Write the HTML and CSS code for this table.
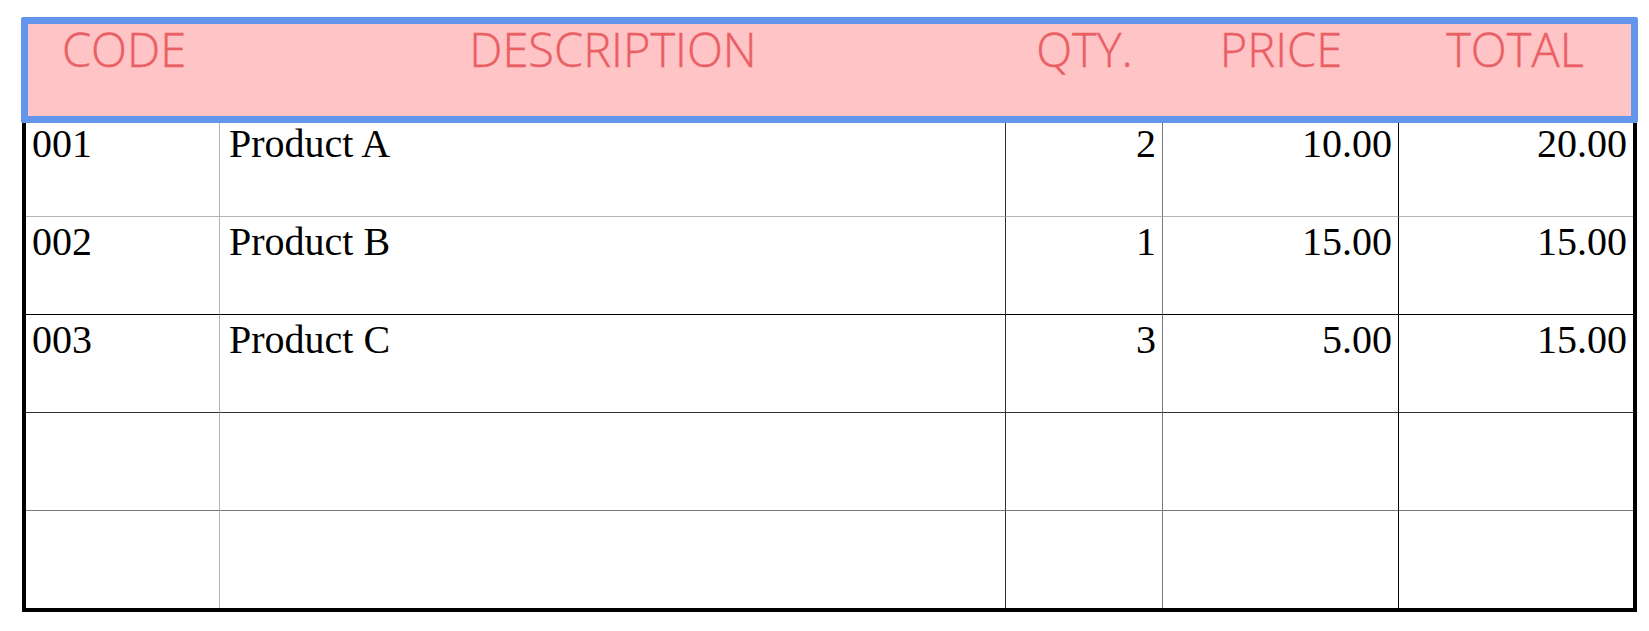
FILE: index.html
```html
<!DOCTYPE html>
<html lang="en">
<head>
<meta charset="utf-8">
<title>Invoice table</title>
<link rel="stylesheet" href="styles.css">
</head>
<body>
<main class="sheet">
  <div class="head">
    <div class="th">CODE</div>
    <div class="th">DESCRIPTION</div>
    <div class="th">QTY.</div>
    <div class="th">PRICE</div>
    <div class="th">TOTAL</div>
  </div>
  <div class="grid">
    <div class="cell c1 r1">001</div>
    <div class="cell c2 r1 desc">Product A</div>
    <div class="cell c3 r1 num">2</div>
    <div class="cell c4 r1 num">10.00</div>
    <div class="cell c5 r1 num">20.00</div>

    <div class="cell c1 r2">002</div>
    <div class="cell c2 r2 desc">Product B</div>
    <div class="cell c3 r2 num">1</div>
    <div class="cell c4 r2 num">15.00</div>
    <div class="cell c5 r2 num">15.00</div>

    <div class="cell c1 r3">003</div>
    <div class="cell c2 r3 desc">Product C</div>
    <div class="cell c3 r3 num">3</div>
    <div class="cell c4 r3 num">5.00</div>
    <div class="cell c5 r3 num">15.00</div>

    <div class="cell c1 r4"></div>
    <div class="cell c2 r4"></div>
    <div class="cell c3 r4"></div>
    <div class="cell c4 r4"></div>
    <div class="cell c5 r4"></div>

    <div class="cell c1 r5"></div>
    <div class="cell c2 r5"></div>
    <div class="cell c3 r5"></div>
    <div class="cell c4 r5"></div>
    <div class="cell c5 r5"></div>
  </div>
</main>
</body>
</html>
```

FILE: styles.css
```css
html, body {
  margin: 0;
  padding: 0;
  background: #ffffff;
}

.sheet {
  padding: 17px 0 0 21px;
  width: 1617px;
}

.head {
  position: relative;
  z-index: 1;
  box-sizing: border-box;
  width: 1617px;
  height: 106px;
  border: 7px solid #6495ed;
  border-radius: 2px;
  background: #ffc4c6;
  display: grid;
  grid-template-columns: 192px 786px 157px 236px 232px;
}

.th {
  font-family: "Open Sans", "Noto Sans", sans-serif;
  font-weight: 300;
  font-size: 47px;
  line-height: 45px;
  padding-top: 3px;
  color: #ea5f64;
  text-align: center;
  -webkit-text-stroke: 0.4px #ea5f64;
}

.grid {
  margin-top: -4px;
  margin-left: 1px;
  box-sizing: border-box;
  width: 1615px;
  border-left: 4px solid #000;
  border-right: 4px solid #000;
  border-bottom: 4px solid #000;
  display: grid;
  grid-template-columns: 194px 786px 157px 236px 234px;
  grid-template-rows: 98px 98px 98px 98px 97px;
}

.cell {
  box-sizing: border-box;
  font-family: "Liberation Serif", "Times New Roman", serif;
  font-size: 40px;
  color: #000;
  padding: 1px 6px 0 6px;
  white-space: nowrap;
}

.desc {
  padding-left: 9px;
}

.num {
  text-align: right;
}

.c1 { border-right: 1px solid #b4b4b4; }
.c2 { border-right: 1px solid #333333; }
.c3 { border-right: 1px solid #7a7a7a; }
.c4 { border-right: 1px solid #000000; }

.r1 { border-bottom: 1px solid #b4b4b4; }
.r2 { border-bottom: 1px solid #000000; }
.r3 { border-bottom: 1px solid #333333; }
.r4 { border-bottom: 1px solid #7a7a7a; }
```
